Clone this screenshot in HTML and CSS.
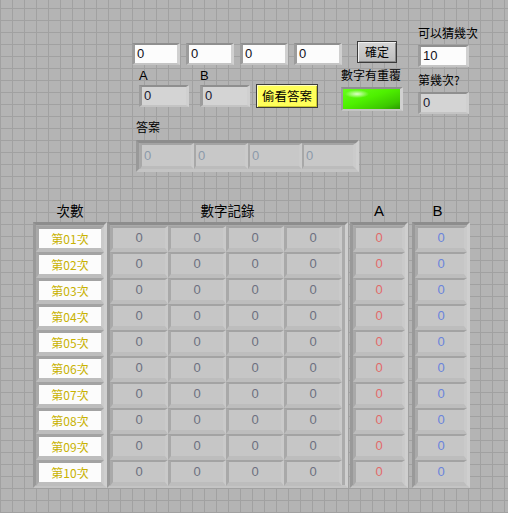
FILE: index.html
```html
<!DOCTYPE html>
<html>
<head>
<meta charset="utf-8">
<link rel="stylesheet" href="styles.css">
</head>
<body>
<div class="panel">

  <div class="cluster c-guess">
    <div class="inputs">
      <div class="ctl white">0</div>
      <div class="ctl white">0</div>
      <div class="ctl white">0</div>
      <div class="ctl white">0</div>
    </div>
    <div class="ab-row">
      <div class="lblgrp g-a"><div class="lbl">A</div><div class="ctl ind">0</div></div>
      <div class="lblgrp g-b"><div class="lbl">B</div><div class="ctl ind">0</div></div>
      <div class="btn-yellow">偷看答案</div>
    </div>
  </div>

  <div class="cluster c-ok">
    <div class="btn-grey">確定</div>
    <div class="lbl lbl-dup">數字有重覆</div>
    <div class="led"><div class="led-in"></div></div>
  </div>

  <div class="cluster c-count">
    <div class="lbl">可以猜幾次</div>
    <div class="ctl white wide">10</div>
    <div class="lbl lbl-n">第幾次?</div>
    <div class="ctl ind wide">0</div>
  </div>

  <div class="cluster c-answer">
    <div class="lbl">答案</div>
    <div class="frame ans-frame">
      <div class="ans-el"><div class="ans-cell">0</div></div>
      <div class="ans-el"><div class="ans-cell">0</div></div>
      <div class="ans-el"><div class="ans-cell">0</div></div>
      <div class="ans-el"><div class="ans-cell">0</div></div>
    </div>
  </div>

  <div class="cluster c-table">
    <div class="col col-n">
      <div class="head">次數</div>
      <div class="frame">
        <div class="el"><div class="cell cw">第01次</div></div>
        <div class="el"><div class="cell cw">第02次</div></div>
        <div class="el"><div class="cell cw">第03次</div></div>
        <div class="el"><div class="cell cw">第04次</div></div>
        <div class="el"><div class="cell cw">第05次</div></div>
        <div class="el"><div class="cell cw">第06次</div></div>
        <div class="el"><div class="cell cw">第07次</div></div>
        <div class="el"><div class="cell cw">第08次</div></div>
        <div class="el"><div class="cell cw">第09次</div></div>
        <div class="el"><div class="cell cw">第10次</div></div>
      </div>
    </div>
    <div class="col col-rec">
      <div class="head">數字記錄</div>
      <div class="frame rec-grid">
        <div class="el"><div class="cell">0</div></div><div class="el"><div class="cell">0</div></div><div class="el"><div class="cell">0</div></div><div class="el"><div class="cell">0</div></div>
        <div class="el"><div class="cell">0</div></div><div class="el"><div class="cell">0</div></div><div class="el"><div class="cell">0</div></div><div class="el"><div class="cell">0</div></div>
        <div class="el"><div class="cell">0</div></div><div class="el"><div class="cell">0</div></div><div class="el"><div class="cell">0</div></div><div class="el"><div class="cell">0</div></div>
        <div class="el"><div class="cell">0</div></div><div class="el"><div class="cell">0</div></div><div class="el"><div class="cell">0</div></div><div class="el"><div class="cell">0</div></div>
        <div class="el"><div class="cell">0</div></div><div class="el"><div class="cell">0</div></div><div class="el"><div class="cell">0</div></div><div class="el"><div class="cell">0</div></div>
        <div class="el"><div class="cell">0</div></div><div class="el"><div class="cell">0</div></div><div class="el"><div class="cell">0</div></div><div class="el"><div class="cell">0</div></div>
        <div class="el"><div class="cell">0</div></div><div class="el"><div class="cell">0</div></div><div class="el"><div class="cell">0</div></div><div class="el"><div class="cell">0</div></div>
        <div class="el"><div class="cell">0</div></div><div class="el"><div class="cell">0</div></div><div class="el"><div class="cell">0</div></div><div class="el"><div class="cell">0</div></div>
        <div class="el"><div class="cell">0</div></div><div class="el"><div class="cell">0</div></div><div class="el"><div class="cell">0</div></div><div class="el"><div class="cell">0</div></div>
        <div class="el"><div class="cell">0</div></div><div class="el"><div class="cell">0</div></div><div class="el"><div class="cell">0</div></div><div class="el"><div class="cell">0</div></div>
      </div>
    </div>
    <div class="col col-a">
      <div class="head head-l">A</div>
      <div class="frame">
        <div class="el"><div class="cell red">0</div></div>
        <div class="el"><div class="cell red">0</div></div>
        <div class="el"><div class="cell red">0</div></div>
        <div class="el"><div class="cell red">0</div></div>
        <div class="el"><div class="cell red">0</div></div>
        <div class="el"><div class="cell red">0</div></div>
        <div class="el"><div class="cell red">0</div></div>
        <div class="el"><div class="cell red">0</div></div>
        <div class="el"><div class="cell red">0</div></div>
        <div class="el"><div class="cell red">0</div></div>
      </div>
    </div>
    <div class="col col-b">
      <div class="head head-l">B</div>
      <div class="frame">
        <div class="el"><div class="cell blue">0</div></div>
        <div class="el"><div class="cell blue">0</div></div>
        <div class="el"><div class="cell blue">0</div></div>
        <div class="el"><div class="cell blue">0</div></div>
        <div class="el"><div class="cell blue">0</div></div>
        <div class="el"><div class="cell blue">0</div></div>
        <div class="el"><div class="cell blue">0</div></div>
        <div class="el"><div class="cell blue">0</div></div>
        <div class="el"><div class="cell blue">0</div></div>
        <div class="el"><div class="cell blue">0</div></div>
      </div>
    </div>
  </div>

</div>
</body>
</html>
```

FILE: styles.css
```css
html, body {
  margin: 0;
  padding: 0;
}
body {
  width: 508px;
  height: 513px;
  overflow: hidden;
  font-family: "Liberation Sans", "Noto Sans CJK TC", sans-serif;
  font-size: 13px;
  color: #000;
}
.panel {
  position: relative;
  width: 508px;
  height: 513px;
  background-color: #b4b4b4;
  background-image:
    linear-gradient(to right, #a1a1a1 1px, transparent 1px),
    linear-gradient(to bottom, #a1a1a1 1px, transparent 1px);
  background-size: 12px 12px;
  background-position: 0 8px;
}
.cluster {
  position: absolute;
}
.lbl {
  font-family: "Noto Sans CJK TC", sans-serif;
  font-size: 12px;
  line-height: 16px;
  white-space: nowrap;
}

/* numeric controls */
.ctl {
  box-sizing: border-box;
  width: 48px;
  height: 22px;
  border-style: solid;
  border-width: 2px 3px 2px 3px;
  border-color: #8f8f8f #d0d0d0 #c4c4c4 #9c9c9c;
  padding-left: 2px;
  line-height: 18px;
  font-size: 13px;
  color: #101020;
}
.ctl.white { background: #fcfcfc; }
.ctl.ind { background: #d4d4d4; color: #202030; }
.ctl.wide { width: 51px; }

.c-guess { left: 132px; top: 43px; }
.inputs { display: flex; gap: 6px; }
.ab-row { display: flex; align-items: flex-start; margin-top: 1px; }
.lblgrp .lbl { font-family: "Liberation Sans", sans-serif; font-size: 13px; line-height: 19px; }
.lblgrp .ctl { width: 50px; }
.g-a { margin-left: 7px; }
.g-b { margin-left: 11px; }
.btn-yellow {
  box-sizing: border-box;
  margin-left: 6px;
  margin-top: 18px;
  width: 62px;
  height: 24px;
  background: #ffff5a;
  border: 1px solid #3c3c3c;
  box-shadow: inset 1px 1px 0 #ffffc0, inset -1px -1px 0 #c8c830;
  font-family: "Noto Sans CJK TC", sans-serif;
  font-size: 12.5px;
  line-height: 22px;
  text-align: center;
}

.c-ok { left: 341px; top: 41px; }
.btn-grey {
  box-sizing: border-box;
  margin-left: 16px;
  width: 40px;
  height: 22px;
  background: linear-gradient(#d6d6d6, #bcbcbc);
  border: 1px solid #3a3a3a;
  box-shadow: inset 1px 1px 0 #f0f0f0, inset -1px -1px 0 #8a8a8a;
  font-family: "Noto Sans CJK TC", sans-serif;
  font-size: 12px;
  line-height: 20px;
  text-align: center;
}
.lbl-dup { margin-top: 4px; }
.led {
  box-sizing: border-box;
  margin-top: 4px;
  width: 62px;
  height: 24px;
  border-style: solid;
  border-width: 2px 3px 2px 2px;
  border-color: #8f8f8f #d0d0d0 #c4c4c4 #9c9c9c;
}
.led-in {
  width: 100%;
  height: 100%;
  background:
    radial-gradient(ellipse 12px 4px at 14px 5px, rgba(230,255,210,0.95), rgba(150,255,90,0) 100%),
    linear-gradient(160deg, #66ff1a 0%, #4ef000 45%, #3cc800 80%, #2a9a00 100%);
}

.c-count { left: 418px; top: 25px; }
.c-count .ctl { margin-top: 4px; }
.lbl-n { margin-top: 5px; }

.c-answer { left: 136px; top: 119px; }
.frame {
  box-sizing: border-box;
  border-style: solid;
  border-width: 3px;
  border-color: #8d8d8d #cfcfcf #c4c4c4 #999999;
  background: #ababab;
}
.ans-frame {
  margin-top: 5px;
  width: 223px;
  height: 32px;
  display: flex;
  padding-left: 1px;
}
.ans-el {
  box-sizing: border-box;
  width: 55px;
  height: 26px;
  border-style: solid;
  border-width: 2px 3px 3px 2px;
  border-color: #a4a4a4 #cbcbcb #bcbcbc #a8a8a8;
}
.ans-cell {
  height: 100%;
  background: #c8c8c8;
  color: #8c9aaa;
  padding-left: 2px;
  line-height: 21px;
  font-size: 13px;
}

/* big table */
.c-table { left: 33px; top: 199px; display: flex; align-items: flex-start; }
.col { display: flex; flex-direction: column; }
.head {
  font-family: "Noto Sans CJK TC", "Liberation Sans", sans-serif;
  font-size: 13.5px;
  line-height: 23px;
  height: 23px;
  text-align: center;
}
.head.head-l {
  font-family: "Liberation Sans", sans-serif;
  font-size: 15px;
}
.col-n { width: 74px; }
.col-rec { width: 241px; }
.col-a { width: 58px; margin-left: 2px; }
.col-b { width: 58px; margin-left: 4px; }
.col-b .head { padding-right: 7px; }
.col .frame { height: 266px; padding-top: 1px; }
.rec-grid { display: grid; grid-template-columns: repeat(4, 58px); }
.el {
  box-sizing: border-box;
  height: 26px;
  border-style: solid;
  border-width: 2px 3px 4px 3px;
  border-color: #a3a3a3 #cacaca #bdbdbd #a9a9a9;
}
.col-n .el { border-width: 3px 3px 4px 3px; }
.cell {
  height: 100%;
  background: #c6c6c6;
  color: #6c7080;
  text-align: center;
  line-height: 20px;
  font-size: 13px;
}
.cell.cw {
  background: #fcfcfc;
  color: #c8b200;
  font-family: "Noto Sans CJK TC", sans-serif;
  font-size: 12px;
  line-height: 19px;
}
.cell.red { color: #e26a6a; }
.cell.blue { color: #6a84dc; }
```
